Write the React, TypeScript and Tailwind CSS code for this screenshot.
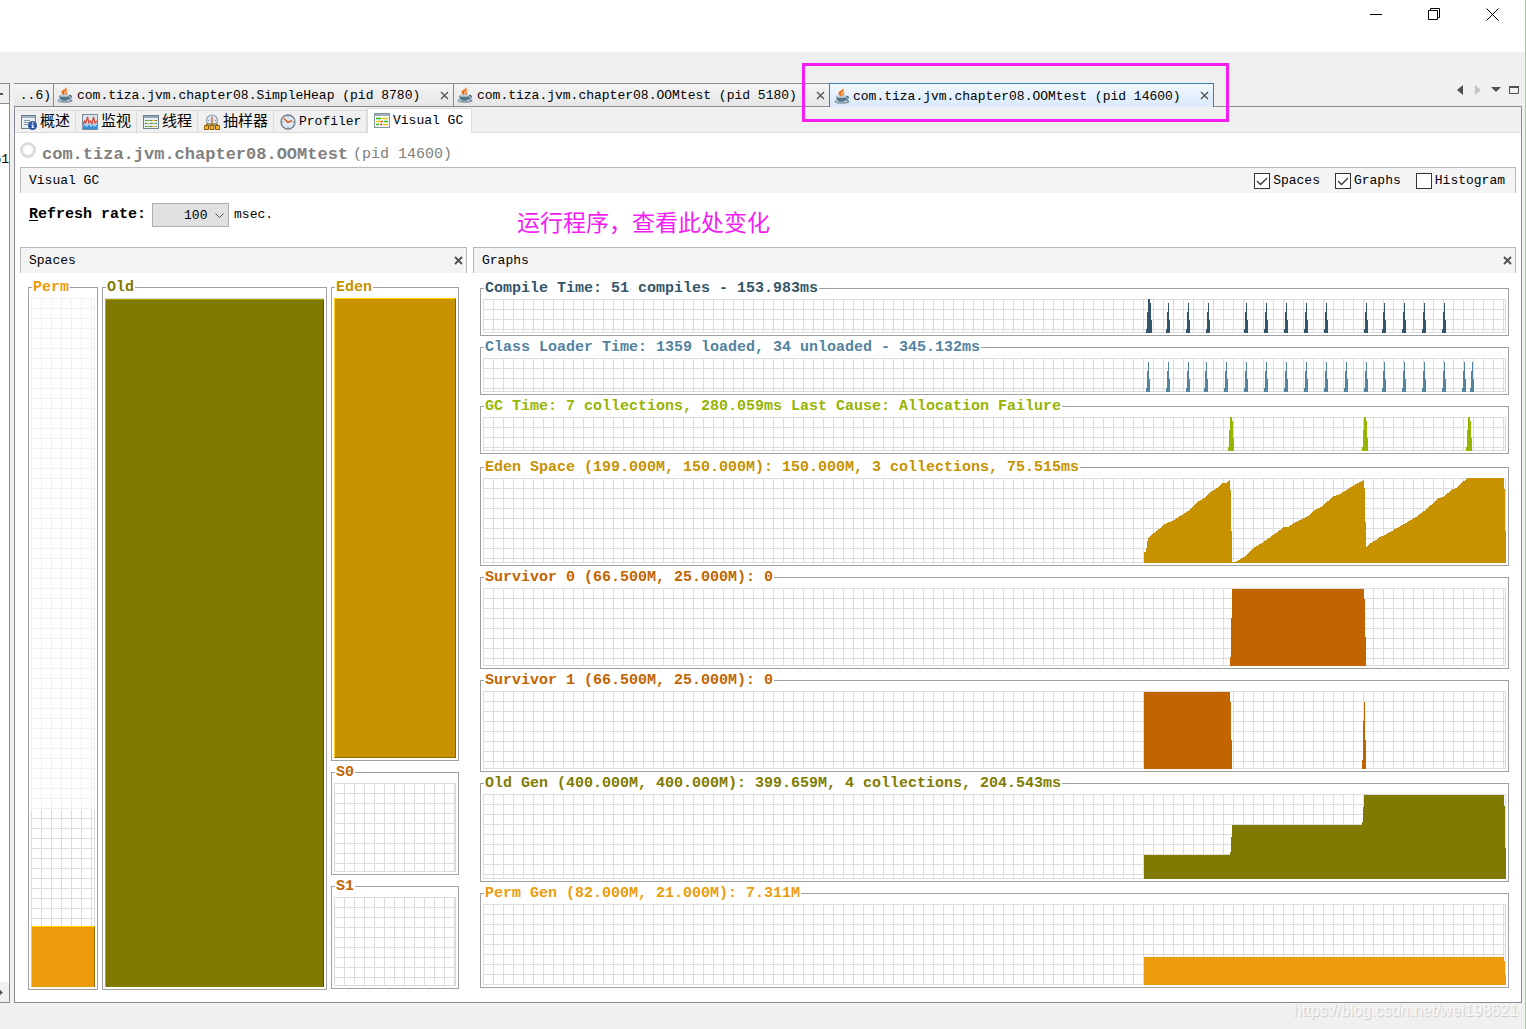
import React, { useState } from 'react';

interface Series {
    title: string;
    color: string;
    fill: string;
    height: string;
    units: number;
    path: string;
    extraTop?: boolean;
}

const WIDE = [30, 13, 0, 0, 4, 21];
const NARROW = [30, 13, 4, 21];

// One column per sample, measured down from the top of a 34px chart
const spike = (start: number, columns: number[]) =>
    columns.map((top, i) => `M${start + i},34V${top}h1V34Z`).join('');

const spikes = (starts: number[], columns: number[]) => starts.map(s => spike(s, columns)).join('');

const SERIES: Series[] = [
    {
        title: 'Compile Time: 51 compiles - 153.983ms',
        color: 'text-[#34566a]',
        fill: 'fill-[#34566a]',
        height: 'h-[34px]',
        units: 34,
        path: spike(3, WIDE) + spikes([23, 43, 63, 101, 121, 141, 161, 181, 221, 239, 259, 279, 299], NARROW)
    },
    {
        title: 'Class Loader Time: 1359 loaded, 34 unloaded - 345.132ms',
        color: 'text-[#5283a0]',
        fill: 'fill-[#5283a0]',
        height: 'h-[34px]',
        units: 34,
        path: spikes([3, 23, 43, 61, 81, 101, 121, 141, 161, 181, 201, 221, 239, 259, 279, 299, 319, 327], NARROW)
    },
    {
        title: 'GC Time: 7 collections, 280.059ms Last Cause: Allocation Failure',
        color: 'text-[#96b400]',
        fill: 'fill-[#96b400]',
        height: 'h-[34px]',
        units: 34,
        path: spikes([85, 219, 323], WIDE)
    },
    {
        title: 'Eden Space (199.000M, 150.000M): 150.000M, 3 collections, 75.515ms',
        color: 'text-[#c79200]',
        fill: 'fill-[#c79200]',
        height: 'h-[85px]',
        units: 85,
        extraTop: true,
        path: 'M1,85V74H3L4,66L5,60L22,46L31,42L45,33L53,25L61,20L69,13L76,9L79,5H83L87,2V12H88V53H89V84H92L103,78L107,73L112,69L119,65L133,55L141,49H145L151,45L165,38L172,32L178,29L191,18L197,16L213,6L221,2V10H222V44H223V70L224,68L228,65L233,62L236,59L240,58L261,46L273,39L281,33L288,27L295,20L300,19L310,11L313,10L321,3L325,0H361V11H362V53H363V85Z'
    },
    {
        title: 'Survivor 0 (66.500M, 25.000M): 0',
        color: 'text-[#c26400]',
        fill: 'fill-[#c26400]',
        height: 'h-[78px]',
        units: 78,
        path: 'M87,78V69H88V30H89V1H221V11H222V49H223V78Z'
    },
    {
        title: 'Survivor 1 (66.500M, 25.000M): 0',
        color: 'text-[#c26400]',
        fill: 'fill-[#c26400]',
        height: 'h-[78px]',
        units: 78,
        path: 'M1,78V1H87V11H88V49H89V78ZM219,78V69H220V30H221V11H222V49H223V78Z'
    },
    {
        title: 'Old Gen (400.000M, 400.000M): 399.659M, 4 collections, 204.543ms',
        color: 'text-[#807b00]',
        fill: 'fill-[#807b00]',
        height: 'h-[85px]',
        units: 85,
        path: 'M1,85V61H87V58H88V43H89V31H219V28H220V13H221V1H361V12H362V54H363V85Z'
    },
    {
        title: 'Perm Gen (82.000M, 21.000M): 7.311M',
        color: 'text-[#ec9c0a]',
        fill: 'fill-[#ec9c0a]',
        height: 'h-[81px]',
        units: 81,
        path: 'M1,81V53H361V57H362V71H363V81Z'
    }
];

const GRID =
    'bg-[linear-gradient(to_right,#dcdcdc_1px,transparent_1px),linear-gradient(to_bottom,#dcdcdc_1px,transparent_1px)] bg-[size:10px_10px] shadow-[inset_-1px_-1px_0_#dcdcdc]';

const JavaIcon = () => (
    <svg viewBox="0 0 16 16" className="h-4 w-4 shrink-0">
        <ellipse cx="8" cy="13.500" rx="7.500" ry="2.300" fill="#8298a6" />
        <ellipse cx="7.500" cy="13" rx="5.500" ry="1.200" fill="#d5dfe5" />
        <path d="M2 8h10.500c0 3-1.500 5.200-3 5.700H5.200C3.500 13.200 2 11 2 8z" fill="#55758a" />
        <path d="M12 8.500c2.900-.6 3.500 2.800-1.500 3.400" fill="none" stroke="#55758a" strokeWidth="1.500" />
        <ellipse cx="7.200" cy="8.300" rx="5" ry="1.500" fill="#c3d2db" />
        <path d="M8.800 0C9.500 2.200 4 3.300 4.500 5.500c.2 1.300 1.700 1.900 2.200 3C8.500 6.500 6.800 5.800 7.500 4.800 8.200 3.700 11 2.500 8.800 0z" fill="#e86d10" />
        <path d="M11 2.800C8.300 4 7.600 5 8.300 6c.5.800.3 1.700-.5 2.500 3-1 2.600-2.400 1.900-3.200-.4-.7.400-1.500 1.300-2.500z" fill="#f08424" />
    </svg>
);

const OverviewIcon = () => (
    <svg viewBox="0 0 16 16" className="h-4 w-4 shrink-0">
        <rect x=".5" y="1.500" width="14" height="13" fill="#e6edf3" stroke="#6d7f90" />
        <path d="M1 2h13v2H1z" fill="#9fb3c6" />
        <path d="M3 6.500h6M3 8.500h5M3 10.500h4" stroke="#8796a4" />
        <circle cx="11.500" cy="11.500" r="4" fill="#2f5bb0" stroke="#1f4590" />
        <path d="M11 8.500h1.500v1.300H11zM10.500 10.700h2v2.600h.7v.8h-2.700v-.8h.7v-1.800h-.7z" fill="#fff" />
    </svg>
);

const MonitorIcon = () => (
    <svg viewBox="0 0 16 16" className="h-4 w-4 shrink-0">
        <rect x=".5" y=".5" width="15" height="15" fill="#dce6ee" stroke="#7b8a97" />
        <path d="M1 15v-4l2-2 1.500 3L7 9l2 3 2-3 1.500 3L15 9v6z" fill="#2f8fd8" />
        <path d="M1 10l1.500-3L4 9l1.500-6L7 9l1.500-2L10 10l1.500-7L13 9l2-2" fill="none" stroke="#d8463c" strokeWidth="1.200" />
        <path d="M1 13l2-3 1.500 3L7 10l2 3 2-3 1.500 3 2.500-3" fill="none" stroke="#b5dcf6" strokeWidth=".8" />
    </svg>
);

const ThreadsIcon = () => (
    <svg viewBox="0 0 16 16" className="h-4 w-4 shrink-0">
        <rect x=".5" y="1.500" width="15" height="13" fill="#e8eff3" stroke="#6f7f8c" />
        <path d="M1 2h14v2H1z" fill="#93a7b8" />
        <path d="M2 6.500h12M2 9.500h12M2 12.500h12" stroke="#5d7d64" />
        <path d="M3 6.500h5M9 9.500h4M3 12.500h4" stroke="#6cb558" />
        <path d="M9 6.500h3M4 9.500h3M9 12.500h4" stroke="#e6b33a" />
    </svg>
);

const SamplerIcon = () => (
    <svg viewBox="0 0 16 16" className="h-4 w-4 shrink-0">
        <circle cx="8" cy="6.500" r="5.500" fill="#dbe8f3" stroke="#8a9dae" strokeWidth="1.200" />
        <path d="M8 2v1.500M4 6.500h1M11 6.500h1" stroke="#7b8fa2" />
        <path d="M8 3.500v4.500" stroke="#d9542b" strokeWidth="1.300" />
        <path d="M2.500 11.500V10h11v1.500M8 8v3.500" fill="none" stroke="#8a5a05" />
        <path d="M.5 11.500h4v4h-4zM6 11.500h4v4H6zM11.500 11.500h4v4h-4z" fill="#f2b632" stroke="#8a5a05" />
    </svg>
);

const ProfilerIcon = () => (
    <svg viewBox="0 0 16 16" className="h-4 w-4 shrink-0">
        <circle cx="8" cy="8" r="7" fill="#dfeaf4" stroke="#6f7d89" strokeWidth="1.300" />
        <path d="M8 2v1.500M8 12.500V14M2 8h1.500M12.500 8H14" stroke="#7591a8" />
        <path d="M4 4.500L8 8.500l4-2" fill="none" stroke="#dd5c22" strokeWidth="1.600" />
    </svg>
);

const VisualGcIcon = () => (
    <svg viewBox="0 0 16 16" className="h-4 w-4 shrink-0">
        <rect x=".5" y=".5" width="15" height="14" fill="#fdfdfd" stroke="#8794a0" />
        <path d="M1 1h14v2H1z" fill="#9db0c1" />
        <path d="M2 5.500h5M10 8.500h4M2 11.500h3" stroke="#16c416" strokeWidth="1.300" />
        <path d="M8 5.500h6M2 8.500h5M9 11.500h5" stroke="#f0c400" strokeWidth="1.300" />
        <path d="M7 8.500h2M6 11.500h2" stroke="#e23b2e" strokeWidth="1.300" />
    </svg>
);

const Cross = ({ bold = false }: { bold?: boolean }) => (
    <svg viewBox="0 0 9 9" className="h-[9px] w-[9px]" stroke="#505050" strokeWidth={bold ? 1.8 : 1.3}>
        <path d="M1 1l7 7M8 1L1 8" />
    </svg>
);

const DOCUMENTS = [
    { name: 'com.tiza.jvm.chapter08.SimpleHeap (pid 8780)', width: 'w-[400px] border-r' },
    { name: 'com.tiza.jvm.chapter08.OOMtest (pid 5180)', width: 'w-[375px]' }
];

const VIEWS = [
    { name: '概述', icon: <OverviewIcon />, width: 'w-[61px]' },
    { name: '监视', icon: <MonitorIcon />, width: 'w-[61px]' },
    { name: '线程', icon: <ThreadsIcon />, width: 'w-[61px]' },
    { name: '抽样器', icon: <SamplerIcon />, width: 'w-[76px]' },
    { name: 'Profiler', icon: <ProfilerIcon />, width: 'w-[93px]' }
];

const Group: React.FC<{ title: string; color: string; children: React.ReactNode }> = ({ title, color, children }) => (
    <fieldset className="min-w-0 border border-[#a0a0a0] px-0.5 pt-[5px] pb-0.5">
        <legend className={`ml-px h-[11px] px-px text-[15px] leading-[11px] font-bold whitespace-pre ${color}`}>{title}</legend>
        {children}
    </fieldset>
);

const PanelHeader: React.FC<{ title: string; children?: React.ReactNode }> = ({ title, children }) => (
    <div className="flex h-[26px] items-center border-x border-t border-[#b8b8b8] bg-[#f4f4f4] pl-2">
        <h2 className="flex-1">{title}</h2>
        {children}
    </div>
);

const Check: React.FC<{ label: string; initial: boolean }> = ({ label, initial }) => {
    const [checked, setChecked] = useState(initial);
    return (
        <label className="flex items-center gap-[3px]">
            <span className="grid">
                <input
                    type="checkbox"
                    checked={checked}
                    onChange={e => setChecked(e.target.checked)}
                    className="col-start-1 row-start-1 h-4 w-4 appearance-none border border-[#333] bg-white"
                />
                {checked && (
                    <svg viewBox="0 0 16 16" className="pointer-events-none col-start-1 row-start-1 h-4 w-4">
                        <path d="M3 8l3.500 3.500L13 5" fill="none" stroke="#333" strokeWidth="1.300" />
                    </svg>
                )}
            </span>
            {label}
        </label>
    );
};

const TitleBar = () => (
    <header className="flex h-[52px] items-start justify-end bg-white pr-1">
        <button aria-label="Minimize" className="flex h-7 w-[58px] items-center justify-center">
            <svg viewBox="0 0 13 13" className="h-[13px] w-[13px]" stroke="#000"><path d="M0 6.500h12" /></svg>
        </button>
        <button aria-label="Restore" className="flex h-7 w-[58px] items-center justify-center">
            <svg viewBox="0 0 13 13" className="h-[13px] w-[13px]" fill="none" stroke="#000">
                <path d="M.5 2.500h9v9h-9zM2.500 2.500v-2h9v9h-2" />
            </svg>
        </button>
        <button aria-label="Close" className="flex h-7 w-[58px] items-center justify-center">
            <svg viewBox="0 0 13 13" className="h-[13px] w-[13px]" stroke="#000"><path d="M.5 .5l12 12M12.500 .5l-12 12" /></svg>
        </button>
    </header>
);

const DocumentTabs = () => (
    <div className="flex h-6">
        <button className="w-10 overflow-hidden border-t border-r border-b border-[#8b8b98] bg-linear-to-b from-[#f4f4f4] to-[#e6e6e6] pt-0.5 pr-0.5 text-right">
            ..6)
        </button>
        {DOCUMENTS.map(doc => (
            <div
                key={doc.name}
                className={`flex items-center gap-1 border-t border-b border-[#8b8b98] bg-linear-to-b from-[#f4f4f4] to-[#e6e6e6] pr-1 pl-[3px] ${doc.width}`}
            >
                <JavaIcon />
                <button className="flex-1 pt-0.5 text-left whitespace-nowrap">{doc.name}</button>
                <button aria-label="Close tab"><Cross /></button>
            </div>
        ))}
        <div className="relative flex w-[385px] items-center gap-[3px] border-x border-t border-[#3c7fb1] bg-linear-to-b from-[#f1f7fe] to-[#d9eafc] pr-1 pl-1">
            <JavaIcon />
            <button className="flex-1 pt-0.5 text-left whitespace-nowrap">com.tiza.jvm.chapter08.OOMtest (pid 14600)</button>
            <button aria-label="Close tab"><Cross /></button>
            <div className="pointer-events-none absolute -top-[21px] -right-4 -bottom-[15px] -left-7 border-3 border-[#f41ef4]" />
        </div>
        <div className="flex flex-1 items-start justify-end border-b border-[#8b8b98] pt-0.5 pr-[3px]">
            <button aria-label="Scroll left" className="w-[18px]">
                <svg viewBox="0 0 6 10" className="h-[10px] w-[6px]"><path d="M6 0v10L0 5z" fill="#505050" /></svg>
            </button>
            <button aria-label="Scroll right" className="w-4">
                <svg viewBox="0 0 6 10" className="h-[10px] w-[6px]"><path d="M0 0v10l6-5z" fill="#c4c4c4" /></svg>
            </button>
            <button aria-label="Show list" className="w-[18px]">
                <svg viewBox="0 0 10 10" className="h-[10px] w-[10px]"><path d="M0 2h10L5 7z" fill="#505050" /></svg>
            </button>
            <button aria-label="Maximize">
                <svg viewBox="0 0 10 10" className="h-[10px] w-[10px]">
                    <path d="M.5 1.500h9v7h-9z" fill="none" stroke="#505050" />
                    <path d="M0 1h10v2H0z" fill="#505050" />
                </svg>
            </button>
        </div>
    </div>
);

const ViewTabs = () => (
    <nav className="flex h-[26px] items-end bg-[#f0f0f0]">
        {VIEWS.map(view => (
            <button
                key={view.name}
                className={`flex h-[23px] items-center gap-[3px] border-y border-r border-[#dcdcdc] pl-[6px] whitespace-nowrap ${view.width}`}
            >
                {view.icon}
                <span className={view.name === 'Profiler' ? '' : 'pt-0.5 text-[15px]'}>{view.name}</span>
            </button>
        ))}
        <button className="flex h-[25px] w-[105px] items-center gap-[3px] border-x border-t border-[#dcdcdc] bg-white pl-[6px] whitespace-nowrap">
            <VisualGcIcon />
            Visual GC
        </button>
        <div className="h-[25px] flex-1 border-b border-[#dcdcdc]" />
    </nav>
);

const Spaces = () => (
    <section className="w-[447px] shrink-0">
        <PanelHeader title="Spaces">
            <button aria-label="Close Spaces" className="pr-[3px]"><Cross bold /></button>
        </PanelHeader>
        <div className="flex items-start gap-1 px-2 pt-[9px]">
            <div className="w-[70px]">
                <Group title="Perm" color="text-[#ec9c0a]">
                    <div className={`flex h-[689px] flex-col justify-between ${GRID}`}>
                        <div className="h-[512px] bg-white/60" />
                        <div className="h-[61px] border-t border-r border-l border-t-[#ffd000] border-r-[#a86c00] border-l-[#ffd000] bg-[#ec9c0a]" />
                    </div>
                </Group>
            </div>
            <div className="min-w-0 flex-1">
                <Group title="Old" color="text-[#807b00]">
                    <div className={`h-[689px] pt-px ${GRID}`}>
                        <div className="h-full border-t border-r border-l border-t-[#a8a400] border-r-[#565200] border-l-[#b0ac00] bg-[#807b00]" />
                    </div>
                </Group>
            </div>
            <div className="flex w-[128px] flex-col gap-[6px]">
                <Group title="Eden" color="text-[#c79200]">
                    <div className="h-[460px] border border-t-[#ffd000] border-r-[#8f6500] border-b-[#8f6500] border-l-[#ffd000] bg-[#c79200]" />
                </Group>
                <Group title="S0" color="text-[#c26400]">
                    <div className={`h-[89px] ${GRID}`} />
                </Group>
                <Group title="S1" color="text-[#c26400]">
                    <div className={`h-[89px] ${GRID}`} />
                </Group>
            </div>
        </div>
    </section>
);

const Graphs = () => (
    <section className="min-w-0 flex-1">
        <PanelHeader title="Graphs">
            <button aria-label="Close Graphs" className="pr-[3px]"><Cross bold /></button>
        </PanelHeader>
        <div className="flex flex-col gap-[6px] px-[7px] pt-[10px]">
            {SERIES.map(series => (
                <div key={series.title} className={series.extraTop ? 'pt-0.5' : ''}>
                    <Group title={series.title} color={series.color}>
                        <div className={`flex justify-end overflow-hidden ${series.height} ${GRID}`}>
                            <svg
                                viewBox={`0 0 363 ${series.units}`}
                                shapeRendering="crispEdges"
                                className={`w-[363px] shrink-0 ${series.height} ${series.fill}`}
                            >
                                <path d={series.path} />
                            </svg>
                        </div>
                    </Group>
                </div>
            ))}
        </div>
    </section>
);

const App: React.FC = () => {
    const [rate, setRate] = useState('100');

    return (
        <div className="flex min-h-screen flex-col border-r border-[#a9d18e] bg-[#f0f0f0] font-['Liberation_Mono','Noto_Sans_CJK_SC',monospace] text-[13px] leading-4 text-black">
            <TitleBar />
            <div className="flex flex-1 gap-1 pt-[31px] pr-[3px]">
                <aside className="flex w-[10px] shrink-0 flex-col overflow-hidden border-t border-r border-b border-[#8b8b98] bg-white">
                    <div className="flex h-5 items-center border-b border-[#8b8b98] bg-[#f0f0f0]">
                        <div className="h-0.5 w-[3px] bg-[#505050]" />
                    </div>
                    <div className="flex flex-1 justify-end pt-12">61</div>
                    <div className="flex h-5 items-center bg-[#f0f0f0]">
                        <svg viewBox="0 0 3 5" className="h-[5px] w-[3px]"><path d="M0 0l3 2.500L0 5z" fill="#505050" /></svg>
                    </div>
                </aside>
                <main className="flex min-w-0 flex-1 flex-col">
                    <DocumentTabs />
                    <div className="flex-1 border-x border-b border-[#8b8b98] bg-white">
                        <ViewTabs />
                        <div className="px-[5px] pb-3">
                            <div className="flex h-[34px] items-center text-[#808080]">
                                <svg viewBox="0 0 16 16" className="h-4 w-4">
                                    <circle cx="8" cy="8" r="6.500" fill="none" stroke="#dcdce0" strokeWidth="3" />
                                </svg>
                                <h1 className="mt-2.5 ml-[6px] text-[17px] font-bold">com.tiza.jvm.chapter08.OOMtest</h1>
                                <span className="mt-2.5 ml-[5px] text-[15px]">(pid 14600)</span>
                            </div>
                            <PanelHeader title="Visual GC">
                                <div className="flex gap-[15px] pr-[10px]">
                                    <Check label="Spaces" initial={true} />
                                    <Check label="Graphs" initial={true} />
                                    <Check label="Histogram" initial={false} />
                                </div>
                            </PanelHeader>
                            <div className="flex h-[54px] items-start pt-[10px] pl-[9px] leading-6">
                                <label htmlFor="rate" className="text-[15px] font-bold">
                                    <span className="underline underline-offset-2">R</span>efresh rate:
                                </label>
                                <div className="relative mr-[5px] ml-[6px]">
                                    <select
                                        id="rate"
                                        value={rate}
                                        onChange={e => setRate(e.target.value)}
                                        className="block h-6 w-[77px] appearance-none border border-[#adadb3] bg-[#e1e1e1] pl-[31px]"
                                    >
                                        <option>100</option>
                                        <option>200</option>
                                        <option>500</option>
                                        <option>1000</option>
                                    </select>
                                    <svg viewBox="0 0 9 6" className="pointer-events-none absolute top-[10px] right-[5px] h-[6px] w-[9px]">
                                        <path d="M.5 .5l4 4 4-4" fill="none" stroke="#505050" />
                                    </svg>
                                </div>
                                <span>msec.</span>
                                <p className="mt-1.5 ml-[244px] font-['Noto_Sans_CJK_SC',sans-serif] text-[23px] whitespace-nowrap text-[#f41ef4]">
                                    运行程序，查看此处变化
                                </p>
                            </div>
                            <div className="flex gap-[6px]">
                                <Spaces />
                                <Graphs />
                            </div>
                        </div>
                    </div>
                </main>
            </div>
            <footer className="h-[26px] pr-[7px] text-right font-['Liberation_Sans',sans-serif] text-base leading-4 text-[#f8f8f8] [text-shadow:1px_1px_1px_#c8c8c8]">
                https://blog.csdn.net/wei198621
            </footer>
        </div>
    );
};

export default App;
